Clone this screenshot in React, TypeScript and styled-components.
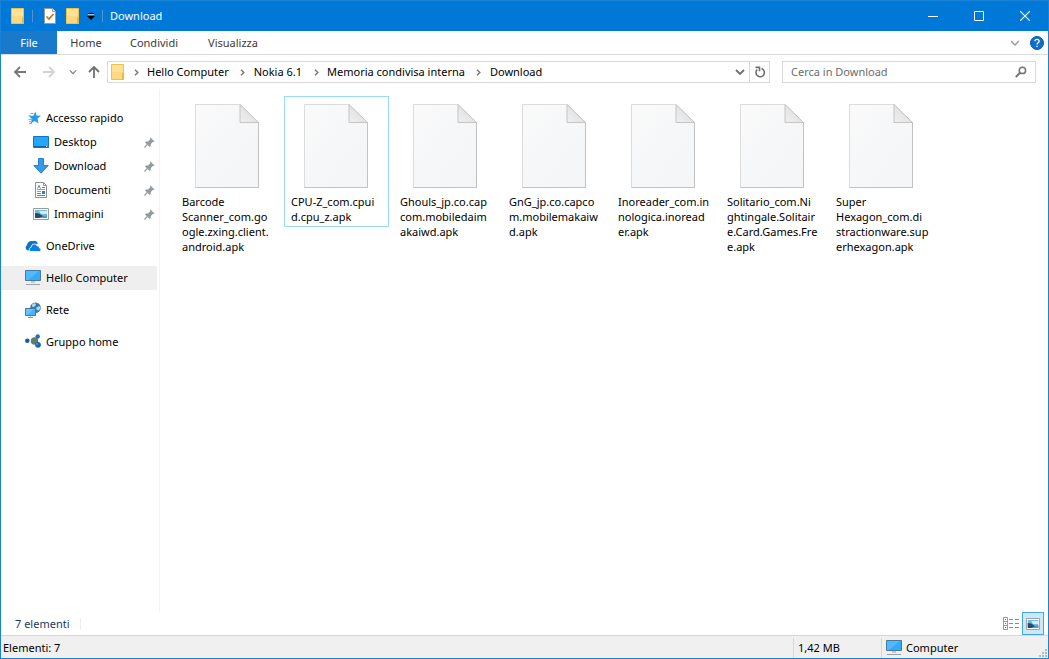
import React from "react";
import styled, { createGlobalStyle } from "styled-components";

const GlobalStyle = createGlobalStyle`
  * { box-sizing: border-box; }
  body { margin: 0; background: #fff; }
  body, button, input { font-family: "Noto Sans", "Open Sans", sans-serif; font-size: 11px; line-height: 16px; color: #000; }
  button { padding: 0; border: 0; background: none; }
  a { color: inherit; text-decoration: none; }
  svg { display: block; flex: none; }
  ul, ol { list-style: none; margin: 0; padding: 0; }
`;

const Window = styled.div`
  display: flex;
  flex-direction: column;
  min-height: 100vh;
  border: 1px solid #1883d7;
  background: #fff;
`;

const TitleBar = styled.header`
  display: flex;
  align-items: center;
  height: 30px;
  padding-left: 10px;
  background: #0078d7;
  color: #fff;
`;

const QuickTool = styled.button<{ $gap: number }>`
  display: flex;
  margin-right: ${(p) => p.$gap}px;
`;

const TitleSeparator = styled.span<{ $gap: number }>`
  width: 1px;
  height: 12px;
  margin-right: ${(p) => p.$gap}px;
  background: #5a8fc8;
`;

const Title = styled.h1`
  flex: 1;
  margin: 0;
  font-size: 11px;
  font-weight: 400;
  line-height: 16px;
`;

const CaptionButton = styled.button`
  display: flex;
  align-items: center;
  justify-content: center;
  width: 46px;
  height: 30px;
`;

const Ribbon = styled.nav`
  display: flex;
  align-items: center;
  height: 24px;
  padding-right: 3px;
  border-bottom: 1px solid #dadbdc;
`;

const RibbonTab = styled.button<{ $active?: boolean; $width: number }>`
  width: ${(p) => p.$width}px;
  height: 23px;
  color: ${(p) => (p.$active ? "#fff" : "#3b3b3b")};
  background: ${(p) => (p.$active ? "#1979ca" : "transparent")};
`;

const Spacer = styled.span`
  flex: 1;
`;

const IconButton = styled.button<{ $width: number }>`
  display: flex;
  align-items: center;
  justify-content: center;
  width: ${(p) => p.$width}px;
  height: 20px;
`;

const AddressRow = styled.div`
  display: flex;
  align-items: center;
  height: 34px;
  padding: 0 12px 0 5px;
`;

const AddressBox = styled.div`
  display: flex;
  align-items: center;
  flex: 1;
  height: 22px;
  margin-left: 2px;
  border: 1px solid #d9d9d9;
`;

const Crumbs = styled.ol`
  display: flex;
  align-items: center;
  flex: 1;
  padding-left: 3px;
`;

const Crumb = styled.li`
  display: flex;
  align-items: center;
  white-space: nowrap;
`;

const CrumbLink = styled.a`
  padding-right: 3px;
`;

const ChevronSlot = styled.span`
  display: flex;
  justify-content: center;
  width: 22px;
`;

const RefreshButton = styled(IconButton)`
  border-left: 1px solid #d9d9d9;
`;

const SearchBox = styled.label`
  display: flex;
  align-items: center;
  width: 254px;
  height: 22px;
  margin-left: 12px;
  padding: 0 8px;
  border: 1px solid #d9d9d9;
`;

const SearchInput = styled.input`
  flex: 1;
  min-width: 0;
  height: 20px;
  padding: 0 0 2px;
  border: 0;
  outline: 0;
  background: none;
  &::placeholder { color: #6d6d6d; opacity: 1; }
`;

const Body = styled.div`
  display: flex;
  flex: 1;
`;

const Sidebar = styled.nav`
  width: 159px;
  padding: 17px 2px 0 0;
  border-right: 1px solid #f3f3f3;
`;

const NavGroup = styled.ul`
  margin-bottom: 8px;
`;

const NavLink = styled.a<{ $level: number; $selected?: boolean }>`
  display: flex;
  align-items: center;
  gap: 5px;
  height: 24px;
  padding-left: ${(p) => 24 + p.$level * 8}px;
  padding-right: 2px;
  background: ${(p) => (p.$selected ? "#efefef" : "transparent")};
  white-space: nowrap;
`;

const NavText = styled.span`
  flex: 1;
`;

const Files = styled.main`
  display: flex;
  flex: 1;
  flex-wrap: wrap;
  align-content: flex-start;
  align-items: flex-start;
  gap: 4px;
  padding: 7px 0 0 15px;
`;

const FileTile = styled.figure<{ $focused?: boolean }>`
  display: flex;
  flex-direction: column;
  gap: 6px;
  width: 105px;
  margin: 0;
  padding: 7px 0 2px;
  border: 1px solid ${(p) => (p.$focused ? "#99d9fa" : "transparent")};
`;

const FileThumb = styled.div`
  padding-left: 19px;
`;

const FileName = styled.figcaption`
  padding-left: 6px;
  line-height: 15px;
  white-space: pre;
`;

const DetailsBar = styled.div`
  display: flex;
  align-items: center;
  height: 23px;
  padding: 0 4px 0 14px;
  color: #1e395b;
`;

const DetailsCount = styled.span`
  padding-right: 10px;
  border-right: 1px solid #f0f0f0;
  line-height: 12px;
`;

const ViewToggle = styled.button<{ $active?: boolean }>`
  display: flex;
  align-items: center;
  justify-content: center;
  width: 22px;
  height: 23px;
  border: 1px solid ${(p) => (p.$active ? "#4aa5e4" : "transparent")};
  background: ${(p) => (p.$active ? "#cbe8f6" : "transparent")};
`;

const StatusBar = styled.footer`
  display: flex;
  align-items: stretch;
  height: 23px;
  border-top: 1px solid #d7d7d7;
  background: #f0f0f0;
`;

const StatusPane = styled.div<{ $width?: number }>`
  display: flex;
  align-items: center;
  gap: 4px;
  flex: ${(p) => (p.$width ? `0 0 ${p.$width}px` : "1")};
  padding-left: ${(p) => (p.$width ? 4 : 2)}px;
  margin-top: 2px;
  border-left: ${(p) => (p.$width ? "1px solid #d7d7d7" : "0")};
`;

const FolderIcon = () => (
  <svg width="14" height="18" viewBox="0 0 14 18">
    <path d="M.5 1.500h12v15H.5z" fill="#ffd97f" stroke="#eec04f" />
    <path d="M1 2h11v7H1z" fill="#ffe294" />
    <path d="M11.500 10.500h1v6h-1z" fill="#ffe8a6" stroke="#e6b93f" />
  </svg>
);

const PropertiesIcon = () => (
  <svg width="12" height="16" viewBox="0 0 12 16">
    <path d="M.5.5h8l3 3v12H.5z" fill="#fff" stroke="#999" />
    <path d="M8.500.5v3h3" fill="#eee" stroke="#999" />
    <path d="M2.500 8.500l2.500 2.500 4.500-5" fill="none" stroke="#c8701a" strokeWidth="1.700" />
  </svg>
);

const CaretIcon = () => (
  <svg width="8" height="8" viewBox="0 0 8 8">
    <path d="M1 1h6v1H1z" fill="#000" />
    <path d="M1 2h6v1H1z" fill="#9dccf1" />
    <path d="M0 4h8L4 8z" fill="#000" />
  </svg>
);

const Chevron = () => (
  <svg width="5" height="7" viewBox="0 0 5 7">
    <path d="M1 .7l2.800 2.800L1 6.300" fill="none" stroke="#7a7a7a" strokeWidth="1.500" />
  </svg>
);

const DownChevron = ({ size, color, weight }: { size: number; color: string; weight: number }) => (
  <svg width={size} height={size} viewBox="0 0 10 10">
    <path d="M1 3l4 4 4-4" fill="none" stroke={color} strokeWidth={weight} />
  </svg>
);

const Arrow = ({ turn, color }: { turn: number; color: string }) => (
  <svg width="14" height="14" viewBox="0 0 14 14">
    <path d="M13 7H2M7 2L2 7l5 5" transform={`rotate(${turn} 7 7)`} fill="none" stroke={color} strokeWidth="1.800" />
  </svg>
);

const HelpIcon = () => (
  <svg width="14" height="14" viewBox="0 0 14 14">
    <circle cx="7" cy="7" r="6.500" fill="#0b6fcb" stroke="#075aa8" />
    <path d="M4.900 5.200C4.900 2.700 9.100 2.700 9.100 5.200 9.100 6.700 7 6.700 7 8.500" fill="none" stroke="#fff" strokeWidth="1.300" />
    <path d="M6.300 9.700h1.400v1.400H6.300z" fill="#fff" />
  </svg>
);

const RefreshIcon = () => (
  <svg width="12" height="12" viewBox="0 0 12 12">
    <path d="M7.500 2.600A4.200 4.200 0 1 1 3.200 3.600M1.500 1.400h4v3.800" fill="none" stroke="#6f6f6f" strokeWidth="1.600" />
  </svg>
);

const SearchIcon = () => (
  <svg width="12" height="12" viewBox="0 0 12 12">
    <circle cx="7.400" cy="4.400" r="3.200" fill="none" stroke="#747474" strokeWidth="1.500" />
    <path d="M5 6.800L.8 11" stroke="#747474" strokeWidth="2" />
  </svg>
);

const PinIcon = () => (
  <svg width="11" height="11" viewBox="0 0 11 11">
    <path d="M6.500.5l4 4-1.200.6-.6-.1-2 2.200-.1 2.200-.8.600-4.800-4.600.9-.8 2.200-.1L6.300 2.300 6 1z" fill="#929b9f" />
    <path d="M3.600 7.200L.5 10.500" stroke="#929b9f" strokeWidth="1.200" />
  </svg>
);

const StarIcon = () => (
  <svg width="16" height="16" viewBox="0 0 16 16">
    <path d="M10.500 1.500l1 4 4.500.3-3.500 2.800 1 4.900-3.800-2.600-4.200 2.600 1.400-4.400-2.900-2.900 4.300-.4z" fill="#249bea" />
    <path d="M5.500 3.500h3M3.500 5.500h2M3.500 9.500h4M4 11.500h3M4 13.500h3" stroke="#69b8ee" />
  </svg>
);

const DesktopIcon = () => (
  <svg width="16" height="12" viewBox="0 0 16 12">
    <path d="M.5.5h15v11H.5z" fill="#26a5ff" stroke="#1274bd" />
    <path d="M1 10.500h12" stroke="#0f67aa" />
    <path d="M13 10.500h2" stroke="#dff2ff" strokeDasharray="1 1" />
  </svg>
);

const DownloadIcon = () => (
  <svg width="16" height="16" viewBox="0 0 16 16">
    <path d="M5.500.5h5v7h4.700L8 15.200.8 7.500h4.700z" fill="#3899e8" stroke="#2380cd" />
  </svg>
);

const DocumentIcon = () => (
  <svg width="16" height="16" viewBox="0 0 16 16">
    <path d="M2.500.5h8l3 3v12h-11z" fill="#fff" stroke="#8a8f93" />
    <path d="M10.500.5v3h3" fill="none" stroke="#8a8f93" />
    <path d="M4.500 6.500l1.500-3 1.500 3M9 5.500h3M4 11.500h4M4 13.500h8" fill="none" stroke="#5b88ab" />
    <path d="M4 7.500h8M4 9.500h4" stroke="#8da1af" />
    <path d="M9 9h3v3H9z" fill="#2481cf" />
  </svg>
);

const PictureIcon = ({ width = 16 }: { width?: number }) => (
  <svg width={width} height="12" viewBox="0 0 16 12" preserveAspectRatio="none">
    <path d="M.5.5h15v11H.5z" fill="#fff" stroke="#9b9b9b" />
    <path d="M2 2h12v8H2z" fill="#6db9ea" />
    <path d="M6 3h8v3H8z" fill="#d3eef9" />
    <path d="M2 5l4 .6L10 8l4 0v2H2z" fill="#254c66" />
    <path d="M8 9l6-2v3H6z" fill="#5b9bbd" />
  </svg>
);

const CloudIcon = () => (
  <svg width="16" height="12" viewBox="0 0 16 12">
    <path d="M3.700 10.500C.5 10.800-.5 6.500 2 5.300 2 2 5.200.3 7.800 1.200c1-1 4.400-.7 5 2.500L7.500 4.300z" fill="#0873ca" />
    <path d="M6.500 11.500C3.500 11.500 3.500 7.700 6.100 7.300 6.300 3.700 11 2.800 12.200 6c1.700-.3 2.300.8 2.200 2 2.300.5 1.800 3.500-.3 3.500z" fill="#0b82e0" stroke="#fff" strokeWidth=".8" />
  </svg>
);

const MonitorIcon = () => (
  <svg width="16" height="16" viewBox="0 0 16 16">
    <path d="M.5.5h15v10H.5z" fill="#35aaf8" stroke="#477c9e" />
    <path d="M1 1h13L3 10H1z" fill="#66c3ff" opacity=".6" />
    <path d="M6 11h4v2H6z" fill="#c2c8cc" />
    <path d="M1 14.500h14" stroke="#9aa2a7" />
  </svg>
);

const NetworkIcon = () => (
  <svg width="16" height="16" viewBox="0 0 16 16">
    <circle cx="10.500" cy="5.800" r="5.300" fill="#3479ad" />
    <path d="M7 2.500l3-1.500 1 2-2 2-2-.4zM11 6l3-2 1.500 1.500-1.500 3-2-.5z" fill="#b7d9ed" />
    <path d="M.5 6.500h10v7H.5z" fill="#49b3f5" stroke="#407ba1" />
    <path d="M1 7h8l-7 6H1z" fill="#86cffa" opacity=".6" />
    <path d="M3 15.500h5M5 14h1" stroke="#8e999f" />
  </svg>
);

const HomegroupIcon = () => (
  <svg width="16" height="16" viewBox="0 0 16 16">
    <circle cx="9.500" cy="7" r="3.700" fill="#647d68" />
    <circle cx="2.300" cy="6.700" r="2.300" fill="#175fa9" />
    <circle cx="12.700" cy="2.500" r="2.200" fill="#1a71bc" />
    <circle cx="13" cy="10.800" r="2.900" fill="#1766b2" />
    <circle cx="12" cy="10" r="1" fill="#4fa0dc" />
  </svg>
);

const PageIcon = () => (
  <svg width="64" height="84" viewBox="0 0 64 84">
    <defs>
      <linearGradient id="sheet" x1="0" y1="0" x2="1" y2="1">
        <stop offset="0" stopColor="#fafafa" />
        <stop offset=".5" stopColor="#f6f7f9" />
        <stop offset="1" stopColor="#f4f5f6" />
      </linearGradient>
      <linearGradient id="fold" x1="0" y1="1" x2="1" y2="0">
        <stop offset="0" stopColor="#f0f0f0" />
        <stop offset="1" stopColor="#d8d8d8" />
      </linearGradient>
    </defs>
    <path d="M.5.5h44.500l18.500 18V83.500H.5z" fill="url(#sheet)" stroke="#dcdcdc" />
    <path d="M63.500 18.500v65H.5" fill="none" stroke="#c2c2c2" />
    <path d="M45 .5v18h18.500z" fill="url(#fold)" stroke="#c4c4c4" />
  </svg>
);

const ListViewIcon = () => (
  <svg width="16" height="13" viewBox="0 0 16 13">
    <path d="M.5.5h4v12h-4zM.5 4.500h4M.5 8.500h4" fill="#fff" stroke="#999" />
    <path d="M2 2h1v1H2zM2 10h1v1H2z" fill="#a34b2c" />
    <path d="M2 6h1v1H2z" fill="#2672b0" />
    <path d="M6 2.500h4M12 2.500h4M6 6.500h4M12 6.500h4M6 10.500h4M12 10.500h4" stroke="#8a8a8a" />
  </svg>
);

const GripIcon = () => (
  <svg width="9" height="9" viewBox="0 0 9 9">
    <path d="M6 0h2v2H6zM3 3h2v2H3zM6 3h2v2H6zM0 6h2v2H0zM3 6h2v2H3zM6 6h2v2H6z" fill="#b8b8b8" />
  </svg>
);

const Grip = styled.span`
  display: flex;
  align-self: flex-end;
`;

type NavItem = { label: string; icon: React.ReactNode; level?: number; pinned?: boolean; selected?: boolean };

const navGroups: NavItem[][] = [
  [
    { label: "Accesso rapido", icon: <StarIcon /> },
    { label: "Desktop", icon: <DesktopIcon />, level: 1, pinned: true },
    { label: "Download", icon: <DownloadIcon />, level: 1, pinned: true },
    { label: "Documenti", icon: <DocumentIcon />, level: 1, pinned: true },
    { label: "Immagini", icon: <PictureIcon />, level: 1, pinned: true },
  ],
  [{ label: "OneDrive", icon: <CloudIcon /> }],
  [{ label: "Hello Computer", icon: <MonitorIcon />, selected: true }],
  [{ label: "Rete", icon: <NetworkIcon /> }],
  [{ label: "Gruppo home", icon: <HomegroupIcon /> }],
];

const files: string[][] = [
  ["Barcode", "Scanner_com.go", "ogle.zxing.client.", "android.apk"],
  ["CPU-Z_com.cpui", "d.cpu_z.apk"],
  ["Ghouls_jp.co.cap", "com.mobiledaim", "akaiwd.apk"],
  ["GnG_jp.co.capco", "m.mobilemakaiw", "d.apk"],
  ["Inoreader_com.in", "nologica.inoread", "er.apk"],
  ["Solitario_com.Ni", "ghtingale.Solitair", "e.Card.Games.Fre", "e.apk"],
  ["Super", "Hexagon_com.di", "stractionware.sup", "erhexagon.apk"],
];

const crumbs = ["Hello Computer", "Nokia 6.1", "Memoria condivisa interna", "Download"];

export default function App() {
  return (
    <>
      <GlobalStyle />
      <Window>
        <TitleBar>
          <QuickTool $gap={7} aria-label="Cartella"><FolderIcon /></QuickTool>
          <TitleSeparator $gap={11} />
          <QuickTool $gap={10} aria-label="Proprietà"><PropertiesIcon /></QuickTool>
          <QuickTool $gap={7} aria-label="Nuova cartella"><FolderIcon /></QuickTool>
          <QuickTool $gap={7} aria-label="Personalizza"><CaretIcon /></QuickTool>
          <TitleSeparator $gap={7} />
          <Title>Download</Title>
          <CaptionButton aria-label="Riduci a icona">
            <svg width="10" height="10"><path d="M0 5.500h10" stroke="#fff" /></svg>
          </CaptionButton>
          <CaptionButton aria-label="Ingrandisci">
            <svg width="10" height="10"><path d="M.5.5h9v9h-9z" fill="none" stroke="#fff" /></svg>
          </CaptionButton>
          <CaptionButton aria-label="Chiudi">
            <svg width="10" height="10"><path d="M0 0l10 10M10 0L0 10" stroke="#fff" strokeWidth="1.100" /></svg>
          </CaptionButton>
        </TitleBar>

        <Ribbon>
          <RibbonTab $active $width={56}>File</RibbonTab>
          <RibbonTab $width={58}>Home</RibbonTab>
          <RibbonTab $width={78}>Condividi</RibbonTab>
          <RibbonTab $width={80}>Visualizza</RibbonTab>
          <Spacer />
          <IconButton $width={28} aria-label="Espandi barra multifunzione">
            <DownChevron size={10} color="#999" weight={1.3} />
          </IconButton>
          <IconButton $width={16} aria-label="Guida"><HelpIcon /></IconButton>
        </Ribbon>

        <AddressRow>
          <IconButton $width={28} aria-label="Indietro"><Arrow turn={0} color="#777" /></IconButton>
          <IconButton $width={30} aria-label="Avanti"><Arrow turn={180} color="#d2d2d2" /></IconButton>
          <IconButton $width={18} aria-label="Percorsi recenti">
            <DownChevron size={8} color="#808080" weight={1.6} />
          </IconButton>
          <IconButton $width={23} aria-label="Su"><Arrow turn={90} color="#707070" /></IconButton>
          <AddressBox>
            <Crumbs>
              <Crumb><FolderIcon /></Crumb>
              {crumbs.map((name) => (
                <Crumb key={name}>
                  <ChevronSlot><Chevron /></ChevronSlot>
                  <CrumbLink href="#">{name}</CrumbLink>
                </Crumb>
              ))}
            </Crumbs>
            <IconButton $width={18} aria-label="Posizioni precedenti">
              <DownChevron size={10} color="#707070" weight={1.9} />
            </IconButton>
            <RefreshButton $width={20} aria-label="Aggiorna"><RefreshIcon /></RefreshButton>
          </AddressBox>
          <SearchBox>
            <SearchInput type="text" placeholder="Cerca in Download" aria-label="Cerca in Download" />
            <SearchIcon />
          </SearchBox>
        </AddressRow>

        <Body>
          <Sidebar>
            {navGroups.map((group) => (
              <NavGroup key={group[0].label}>
                {group.map((item) => (
                  <li key={item.label}>
                    <NavLink href="#" $level={item.level ?? 0} $selected={item.selected}>
                      {item.icon}
                      <NavText>{item.label}</NavText>
                      {item.pinned && <PinIcon />}
                    </NavLink>
                  </li>
                ))}
              </NavGroup>
            ))}
          </Sidebar>
          <Files>
            {files.map((lines, index) => (
              <FileTile key={lines[0]} $focused={index === 1}>
                <FileThumb><PageIcon /></FileThumb>
                <FileName>{lines.join("\n")}</FileName>
              </FileTile>
            ))}
          </Files>
        </Body>

        <DetailsBar>
          <DetailsCount>7 elementi</DetailsCount>
          <Spacer />
          <ViewToggle aria-label="Dettagli"><ListViewIcon /></ViewToggle>
          <ViewToggle $active aria-label="Icone grandi"><PictureIcon width={14} /></ViewToggle>
        </DetailsBar>

        <StatusBar>
          <StatusPane>Elementi: 7</StatusPane>
          <StatusPane $width={88}>1,42 MB</StatusPane>
          <StatusPane $width={158}><MonitorIcon />Computer</StatusPane>
          <Grip><GripIcon /></Grip>
        </StatusBar>
      </Window>
    </>
  );
}
